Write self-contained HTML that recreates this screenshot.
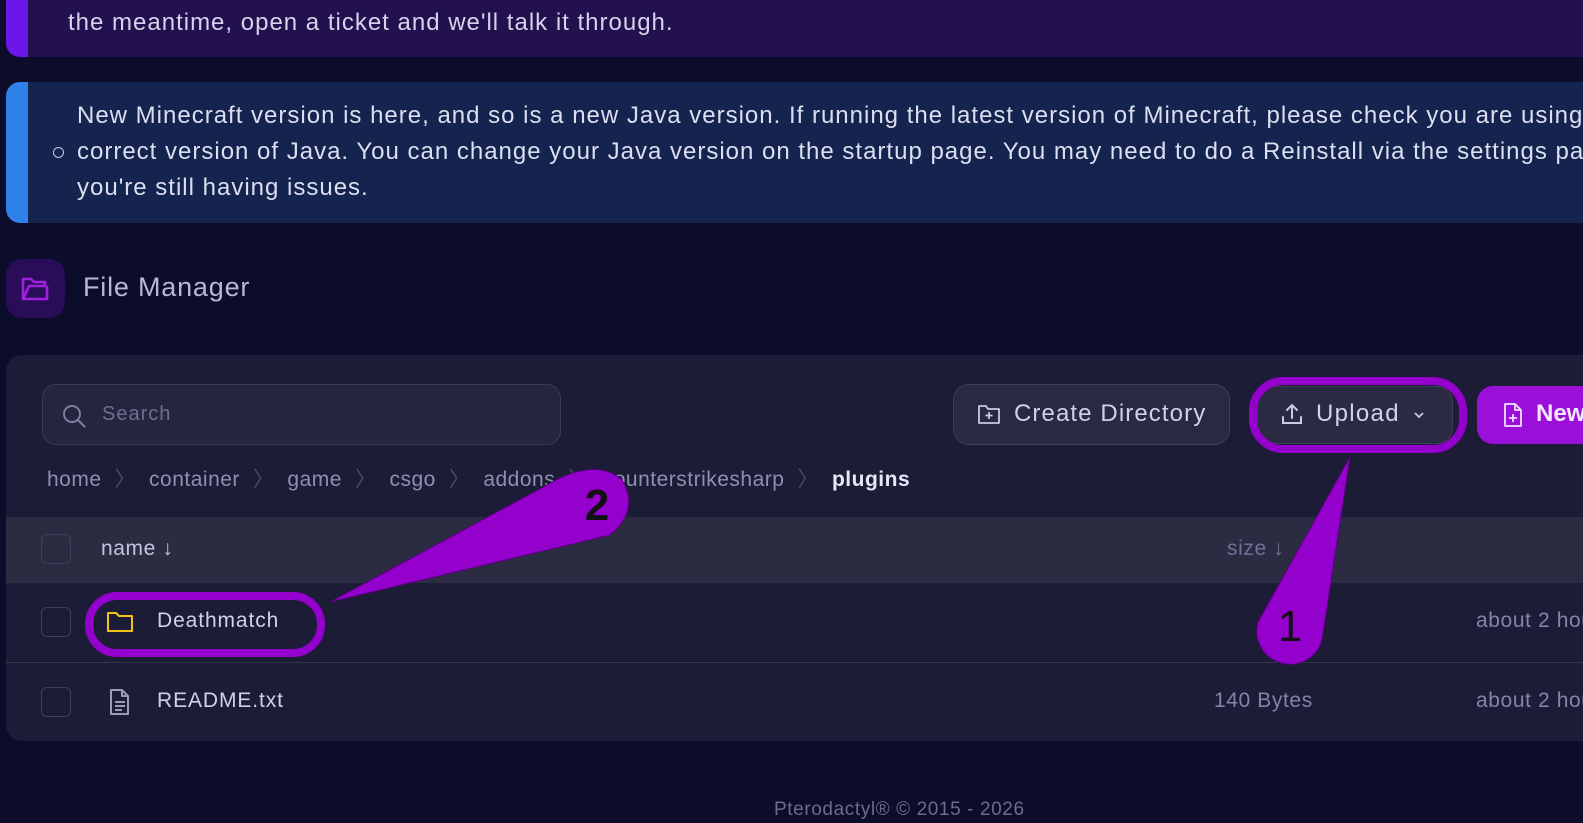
<!DOCTYPE html>
<html><head><meta charset="utf-8"><style>
*{box-sizing:border-box;margin:0;padding:0}
body{width:1583px;height:823px;overflow:hidden;background:#0c0d2a;font-family:"Liberation Sans",sans-serif;position:relative;color:#cfd0e6}
.abs{position:absolute}
.t{white-space:nowrap}
</style></head><body>
<!-- top banner -->
<div class="abs" style="left:6px;top:-40px;width:1600px;height:97px;background:#22104f;border-radius:14px 0 0 14px;overflow:hidden">
  <div class="abs" style="left:0;top:0;width:22px;height:100%;background:#6b17ec"></div>
  <div class="abs t" style="left:62px;top:-2px;font-size:24px;letter-spacing:1px;color:#d6d3ec">Please note that some features and changes are being worked on by our team and might not be available yet. In</div>
  <div class="abs t" style="left:62px;top:49px;font-size:24px;letter-spacing:1px;color:#d6d3ec">the meantime, open a ticket and we'll talk it through.</div>
</div>
<!-- blue banner -->
<div class="abs" style="left:6px;top:82px;width:1600px;height:141px;background:#14244f;border-radius:14px 0 0 14px;overflow:hidden">
  <div class="abs" style="left:0;top:0;width:22px;height:100%;background:#2f80e8"></div>
  <div class="abs" style="left:47px;top:65px;width:11px;height:11px;border:1.3px solid #c8cbe0;border-radius:50%"></div>
  <div class="abs" style="left:71px;top:16px;font-size:24px;letter-spacing:1px;line-height:36px;color:#dcdff0;width:1700px">New Minecraft version is here, and so is a new Java version. If running the latest version of Minecraft, please check you are using the<br>correct version of Java. You can change your Java version on the startup page. You may need to do a Reinstall via the settings page if<br>you're still having issues.</div>
</div>
<!-- title -->
<div class="abs" style="left:6px;top:259px;width:59px;height:59px;background:#2a0d58;border-radius:16px"></div>
<svg class="abs" style="left:20px;top:275px" width="32" height="28" viewBox="0 0 32 28" fill="none" stroke="#a020e0" stroke-width="2.6" stroke-linejoin="round"><path d="M3 4h8l3 3h11v4H9l-6 13z M3 4v20h24V11"/></svg>
<div class="abs t" style="left:83px;top:272px;font-size:27px;letter-spacing:0.8px;color:#b7b7d6">File Manager</div>
<!-- panel -->
<div class="abs" style="left:6px;top:355px;width:1600px;height:386px;background:#1c1c37;border-radius:16px 0 0 16px;overflow:hidden">
  <div class="abs" style="left:0;top:162px;width:100%;height:66px;background:#2b2b41"></div>
  <div class="abs" style="left:0;top:307px;width:100%;height:1px;background:#34344c"></div>
</div>
<!-- search -->
<div class="abs" style="left:42px;top:384px;width:519px;height:61px;background:#25253e;border:1px solid #3b3b55;border-radius:14px"></div>
<svg class="abs" style="left:60px;top:402px" width="28" height="28" viewBox="0 0 28 28" fill="none" stroke="#7c7ea0" stroke-width="2"><circle cx="12" cy="12" r="8"/><path d="M18 18l7 7"/></svg>
<div class="abs t" style="left:102px;top:403px;font-size:20px;letter-spacing:1px;color:#6d6f92">Search</div>
<!-- create directory -->
<div class="abs" style="left:953px;top:384px;width:277px;height:61px;background:#292a42;border:1px solid #3d3d57;border-radius:16px"></div>
<svg class="abs" style="left:977px;top:403px" width="24" height="22" viewBox="0 0 24 22" fill="none" stroke="#c9cbe0" stroke-width="1.8" stroke-linejoin="round"><path d="M2 3h7l2 3h11v14H2z"/><path d="M12 9v7M8.5 12.5h7"/></svg>
<div class="abs t" style="left:1014px;top:400px;font-size:24px;letter-spacing:1.1px;color:#cfd1e6">Create Directory</div>
<!-- upload -->
<div class="abs" style="left:1257px;top:386px;width:196px;height:58px;background:#2a2b43;border:1px solid #3d3d57;border-radius:16px"></div>
<svg class="abs" style="left:1280px;top:402px" width="24" height="24" viewBox="0 0 24 24" fill="none" stroke="#c9cbe0" stroke-width="2" stroke-linecap="round"><path d="M12 16V3M7 8l5-5 5 5M3 15v6h18v-6"/></svg>
<div class="abs t" style="left:1316px;top:400px;font-size:24px;letter-spacing:1.3px;color:#d0d2e6">Upload</div>
<svg class="abs" style="left:1413px;top:410px" width="12" height="10" viewBox="0 0 12 10" fill="none" stroke="#c9cbe0" stroke-width="1.8"><path d="M2 3l4 4 4-4"/></svg>
<!-- new -->
<div class="abs" style="left:1477px;top:386px;width:140px;height:58px;background:#9a10d8;border-radius:16px"></div>
<svg class="abs" style="left:1502px;top:402px" width="22" height="26" viewBox="0 0 22 26" fill="none" stroke="#f0e0ff" stroke-width="1.8" stroke-linejoin="round"><path d="M3 2h10l6 6v16H3z M13 2v6h6 M11 12v8M7 16h8"/></svg>
<div class="abs t" style="left:1536px;top:400px;font-size:24px;color:#f4e8ff;font-weight:bold">New File</div>
<!-- breadcrumb -->
<div class="abs t" style="left:47px;top:463px;font-size:21px;letter-spacing:0.5px;color:#8e90b0">home<span style="color:#4a4b66;padding:0 13px">〉</span>container<span style="color:#4a4b66;padding:0 13px">〉</span>game<span style="color:#4a4b66;padding:0 13px">〉</span>csgo<span style="color:#4a4b66;padding:0 13px">〉</span>addons<span style="color:#4a4b66;padding:0 13px">〉</span>counterstrikesharp<span style="color:#4a4b66;padding:0 13px">〉</span><b style="color:#e6e6f4">plugins</b></div>
<!-- header row -->
<div class="abs" style="left:41px;top:534px;width:30px;height:30px;border:1.5px solid #3e3f58;border-radius:6px"></div>
<div class="abs t" style="left:101px;top:537px;font-size:21px;letter-spacing:0.6px;color:#c4c6de">name ↓</div>
<div class="abs t" style="left:1227px;top:537px;font-size:21px;letter-spacing:0.6px;color:#6f7196">size ↓</div>
<!-- row 1 -->
<div class="abs" style="left:41px;top:607px;width:30px;height:30px;border:1.5px solid #3e3f58;border-radius:6px"></div>
<svg class="abs" style="left:106px;top:610px" width="28" height="24" viewBox="0 0 28 24" fill="none" stroke="#f0c419" stroke-width="2" stroke-linejoin="round"><path d="M2 3h8l3 3h13v15H2z"/></svg>
<div class="abs t" style="left:157px;top:609px;font-size:21px;letter-spacing:0.9px;color:#d0d2e8">Deathmatch</div>
<div class="abs t" style="left:1476px;top:609px;font-size:21px;letter-spacing:0.6px;color:#8284aa">about 2 hours ago</div>
<!-- row 2 -->
<div class="abs" style="left:41px;top:687px;width:30px;height:30px;border:1.5px solid #3e3f58;border-radius:6px"></div>
<svg class="abs" style="left:108px;top:688px" width="24" height="28" viewBox="0 0 24 28" fill="none" stroke="#9a9cb8" stroke-width="2" stroke-linejoin="round"><path d="M3 2h11l6 6v18H3z M14 2v6h6 M7 14h10M7 18h10M7 22h7"/></svg>
<div class="abs t" style="left:157px;top:689px;font-size:21px;letter-spacing:0.9px;color:#d0d2e8">README.txt</div>
<div class="abs t" style="left:1214px;top:689px;font-size:21px;letter-spacing:0.6px;color:#8284aa">140 Bytes</div>
<div class="abs t" style="left:1476px;top:689px;font-size:21px;letter-spacing:0.6px;color:#8284aa">about 2 hours ago</div>
<!-- footer -->
<div class="abs t" style="left:774px;top:799px;font-size:19px;letter-spacing:0.6px;color:#6a6c90">Pterodactyl® © 2015 - 2026</div>
<!-- annotations -->
<svg class="abs" style="left:0;top:0" width="1583" height="823" viewBox="0 0 1583 823">
<g fill="#9400cc" stroke="#5a0080" stroke-width="1">
  <path d="M1350 457 L1322 640 A33 33 0 1 1 1258 622 Z"/>
  <path d="M330 602 L560 478 Q600 460 622 480 Q640 510 610 535 Z"/>
</g>
<g fill="none" stroke="#9400cc" stroke-width="8">
  <rect x="1253" y="381" width="210" height="68" rx="30"/>
  <rect x="89" y="596" width="232" height="57" rx="28"/>
</g>
<text x="1290" y="641" font-family="Liberation Sans,sans-serif" font-size="44" fill="#111" text-anchor="middle">1</text>
<text x="597" y="520" font-family="Liberation Sans,sans-serif" font-size="44" font-weight="bold" fill="#111" text-anchor="middle">2</text>
</svg>
</body></html>
